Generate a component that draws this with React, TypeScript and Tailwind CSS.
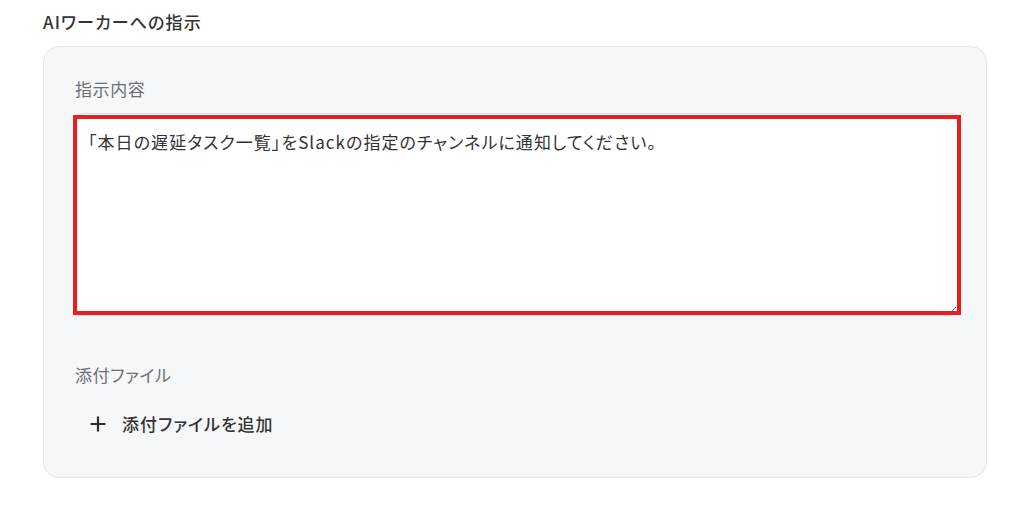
import React from "react";

const ff = '"Noto Sans CJK JP", "Noto Sans", sans-serif';

export default function App() {
  return (
    <div
      className="w-[1029px] h-[507px] bg-white px-[43px] pt-[10px] [font-feature-settings:'palt']"
      style={{ fontFamily: ff }}
    >
      <h2 className="text-[17px] leading-[24px] font-medium text-[#333333] tracking-[1.1px]">
        AIワーカーへの指示
      </h2>
      <div className="mt-[12px] w-[944px] h-[432px] rounded-[16px] border border-[#e6e8eb] bg-[#f6f7f9] px-[31px] pt-[30px]">
        <div className="text-[17px] leading-[24px] text-[#6b6f76] tracking-[0.6px]">指示内容</div>
        <div className="relative mt-[12px] mr-[-3px]">
          <textarea
            readOnly
            className="block w-full h-[203px] resize-y rounded-[8px] border border-[#d8dbe0] bg-white px-[12px] py-[16px] text-[17px] leading-[24px] text-[#333333] tracking-[1.05px] outline-none [font-feature-settings:'palt']"
            style={{ fontFamily: ff }}
            defaultValue="「本日の遅延タスク一覧」をSlackの指定のチャンネルに通知してください。"
          />
          <div className="pointer-events-none absolute left-[-2px] right-[-3px] top-[2px] bottom-[1px] border-[4px] border-[#e81f1f]" />
        </div>
        <div className="mt-[47px] text-[17px] leading-[24px] text-[#6b6f76] tracking-[0.6px]">添付ファイル</div>
        <button className="mt-[25px] flex items-center gap-[16px] pl-[15px] h-[24px] text-[17px] leading-[24px] font-medium text-[#333333] tracking-[1px]">
          <svg width="16" height="16" viewBox="0 0 16 16" fill="none">
            <path d="M8 0.5V15.5M0.5 8H15.5" stroke="#2b2f36" strokeWidth="2.2" />
          </svg>
          <span>添付ファイルを追加</span>
        </button>
      </div>
    </div>
  );
}
